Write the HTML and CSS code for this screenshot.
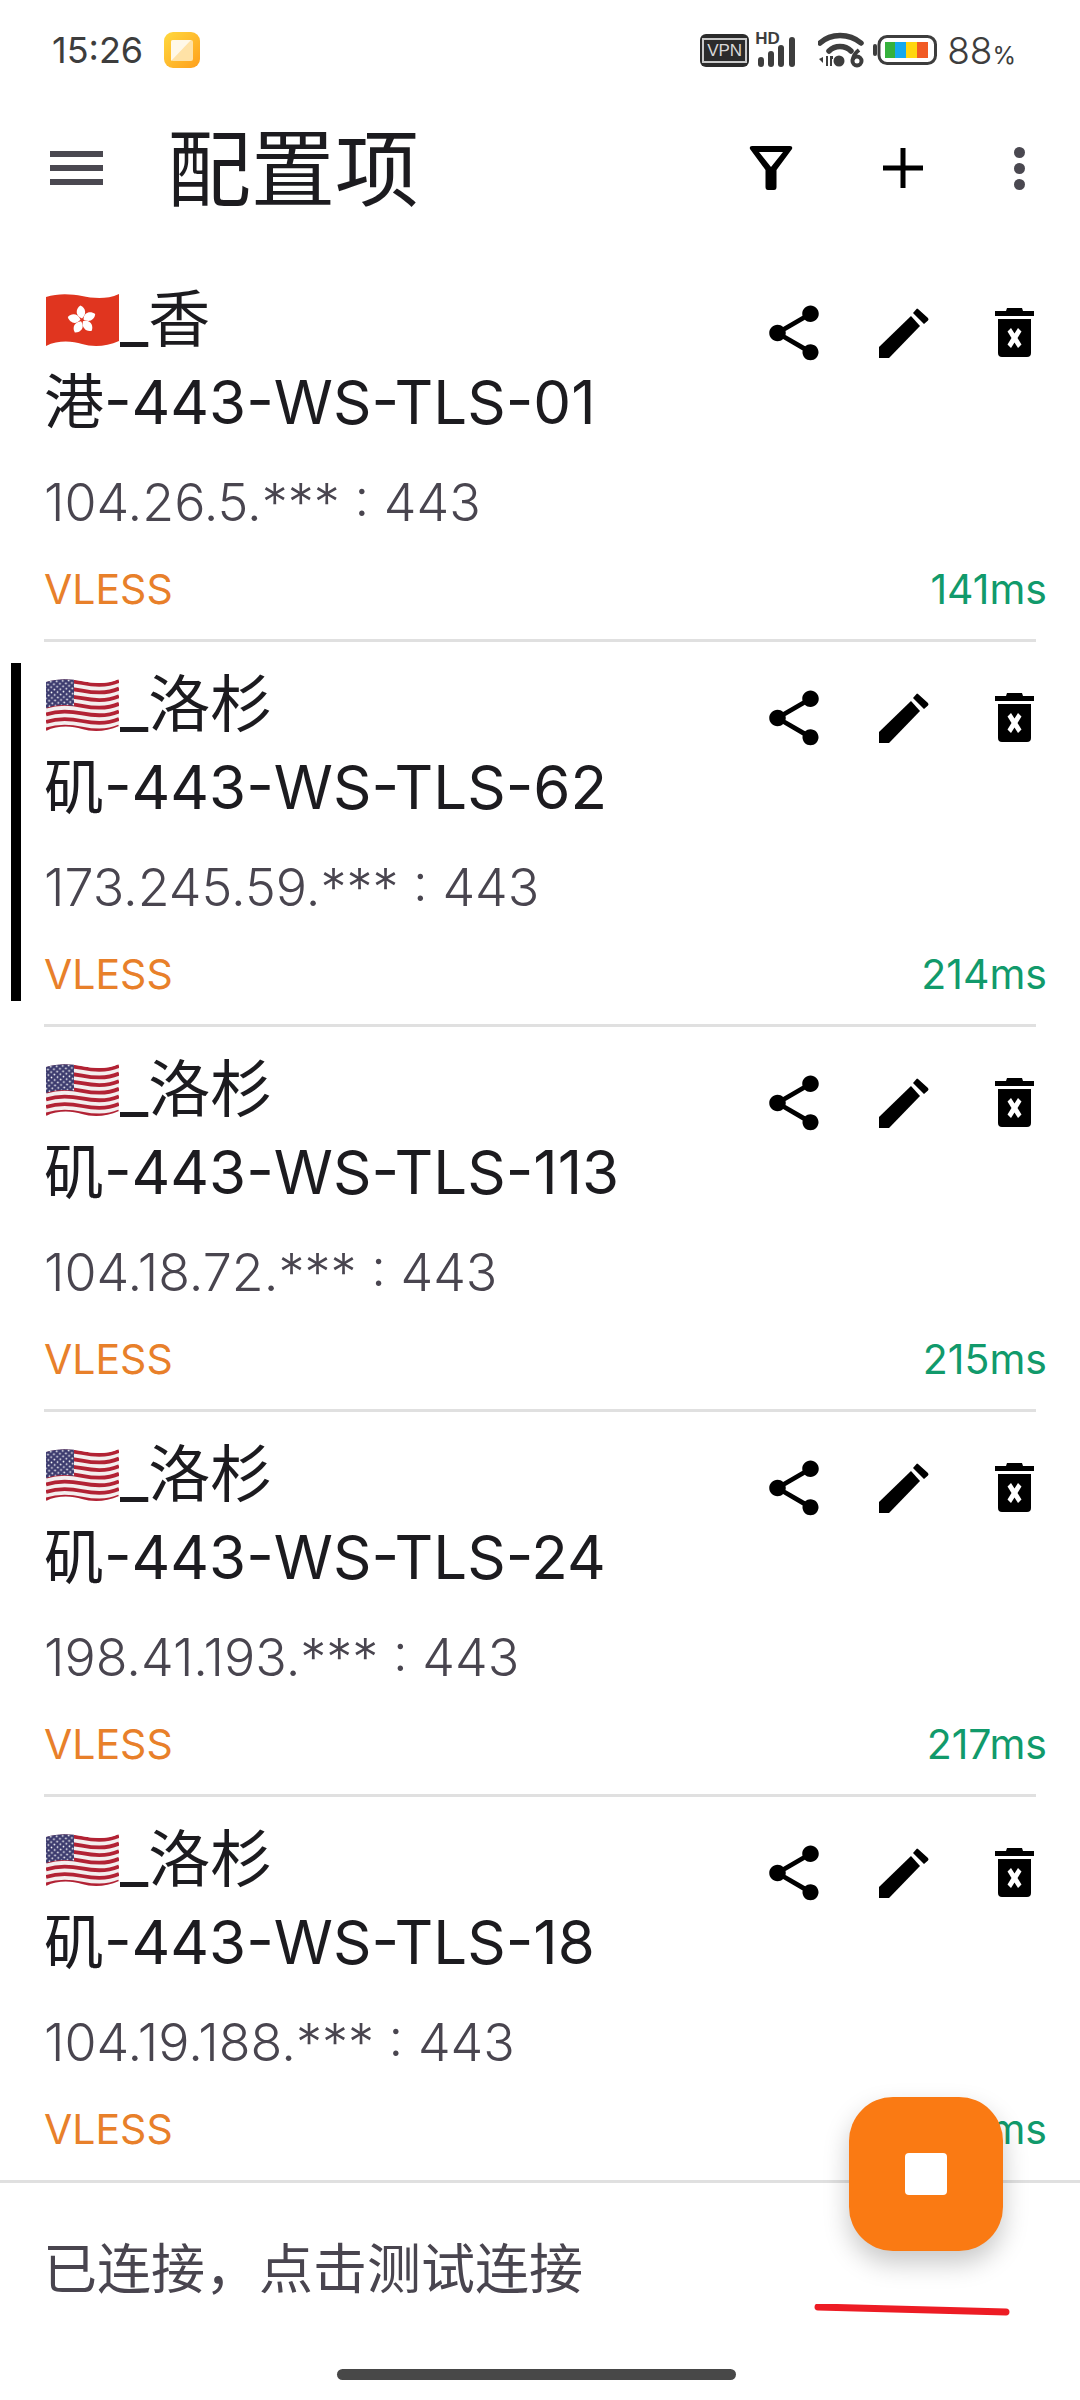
FILE: index.html
```html
<!DOCTYPE html>
<html lang="zh-CN">
<head>
    <meta charset="UTF-8">
    <meta name="viewport" content="width=device-width, initial-scale=1.0">
    <title>配置项</title>
    <link rel="stylesheet" href="styles.css">
</head>
<body>
    <svg class="defs" width="0" height="0">
        <defs>
            <clipPath id="flag-clip">
                <path d="M0 4C12 0 26 1 36 3S60 7 73 1V48C60 54 46 54 36 51S12 47 0 53Z"/>
            </clipPath>
            <pattern id="stars" width="6" height="5.4" patternUnits="userSpaceOnUse" patternTransform="rotate(-4)">
                <circle cx="1.5" cy="1.4" r="0.9" fill="#fff"/>
                <circle cx="4.5" cy="4.1" r="0.9" fill="#fff"/>
            </pattern>
            <path id="stripe" d="M0 0C12 -4 26 -3 36 -1S60 3 73 -3" fill="none" stroke="#b22234" stroke-width="3.8"/>
            <symbol id="flag-us" viewBox="0 0 73 54">
                <g clip-path="url(#flag-clip)">
                    <rect width="73" height="54" fill="#f4eeee"/>
                    <use href="#stripe" y="6"/>
                    <use href="#stripe" y="13.6"/>
                    <use href="#stripe" y="21.2"/>
                    <use href="#stripe" y="28.8"/>
                    <use href="#stripe" y="36.4"/>
                    <use href="#stripe" y="44"/>
                    <use href="#stripe" y="51.6"/>
                    <path d="M0 0H28V28C18 26 9 27 0 30Z" fill="#3c3b6e"/>
                    <path d="M0 0H28V28C18 26 9 27 0 30Z" fill="url(#stars)"/>
                </g>
            </symbol>
            <symbol id="flag-hk" viewBox="0 0 73 54">
                <g clip-path="url(#flag-clip)">
                    <rect width="73" height="54" fill="#e0351f"/>
                </g>
                <g fill="#fff" transform="translate(36 27) scale(0.8)">
                    <path id="petal" d="M0 -2C-9 -5 -8 -14 -2 -18C5 -15 6 -7 0 -2Z"/>
                    <use href="#petal" transform="rotate(72)"/>
                    <use href="#petal" transform="rotate(144)"/>
                    <use href="#petal" transform="rotate(216)"/>
                    <use href="#petal" transform="rotate(288)"/>
                </g>
            </symbol>
            <symbol id="ic-share" viewBox="0 0 24 24">
                <path d="M18 16.08c-.76 0-1.44.3-1.96.77L8.91 12.7c.05-.23.09-.46.09-.7s-.04-.47-.09-.7l7.05-4.11c.54.5 1.25.81 2.04.81 1.66 0 3-1.34 3-3s-1.34-3-3-3-3 1.34-3 3c0 .24.04.47.09.7L8.04 9.81C7.5 9.31 6.79 9 6 9c-1.66 0-3 1.34-3 3s1.34 3 3 3c.79 0 1.5-.31 2.04-.81l7.12 4.16c-.05.21-.08.43-.08.65 0 1.61 1.31 2.92 2.92 2.92s2.92-1.31 2.92-2.92-1.31-2.92-2.92-2.92z"/>
            </symbol>
            <symbol id="ic-edit" viewBox="-8 -8 66 66">
                <path d="M0 39L32 8 41 18 10 50H0Z"/>
                <path d="M39 1L49 10Q50 11.500 49 12.500L45 16 34 5 37.500 1Q38 0 39 1Z"/>
            </symbol>
            <symbol id="ic-trash" viewBox="-14 -8 66 66">
                <path d="M12 0H27L28 3H39V8H0V3H11Z"/>
                <path fill-rule="evenodd" d="M3 11H36V45Q36 49 32 49H7Q3 49 3 45ZM12.500 23.500L16 20 19.500 25.500 23 20 26.500 23.500 22.500 30 26.500 36.500 23 40 19.500 34.500 16 40 12.500 36.500 16.500 30Z"/>
            </symbol>
        </defs>
    </svg>

    <div class="phone">
        <div class="status">
            <span class="clock">15:26</span>
            <svg class="app-icon" viewBox="0 0 36 36">
                <defs>
                    <linearGradient id="app-grad" x1="0" y1="0" x2="1" y2="1">
                        <stop offset="0" stop-color="#ffd93f"/>
                        <stop offset="1" stop-color="#ff9f1c"/>
                    </linearGradient>
                </defs>
                <rect width="36" height="36" rx="9" fill="url(#app-grad)"/>
                <rect x="7" y="8" width="22" height="21" rx="2" fill="#ffe2a6"/>
                <path d="M7 29V10Q7 8 9 8H27Z" fill="#fff8e8"/>
            </svg>
            <div class="status-right">
                <span class="vpn"><span class="vpn-in">VPN</span></span>
                <span class="signal">
                    <span class="hd">HD</span>
                    <svg class="bars" viewBox="0 0 37 30">
                        <rect x="0" y="20" width="6" height="10" rx="3"/>
                        <rect x="10" y="14" width="6" height="16" rx="3"/>
                        <rect x="20" y="8" width="6" height="22" rx="3"/>
                        <rect x="31" y="0" width="6" height="30" rx="3"/>
                    </svg>
                </span>
                <svg class="wifi" viewBox="0 0 46 36">
                    <path d="M2 11C13 1 31 1 43 11" fill="none" stroke="#3d3d3d" stroke-width="5.500" stroke-linecap="round"/>
                    <path d="M11 19C17 13 27 13 33 19" fill="none" stroke="#3d3d3d" stroke-width="5.500" stroke-linecap="round"/>
                    <circle cx="21" cy="29" r="5.500" fill="#3d3d3d"/>
                    <path d="M1 27L5 31V25ZM8 24H10V34H8ZM12 24H15V27H14V34H12Z" fill="#3d3d3d"/>
                    <circle cx="39" cy="29" r="4.500" fill="none" stroke="#3d3d3d" stroke-width="4"/>
                    <path d="M35 28C35 24 37 21 41 18" fill="none" stroke="#3d3d3d" stroke-width="4"/>
                </svg>
                <svg class="battery" viewBox="0 0 64 30">
                    <rect x="0" y="9" width="4" height="12" rx="2" fill="#3d3d3d"/>
                    <rect x="6" y="1.500" width="56.500" height="27" rx="8" fill="#fff" stroke="#3d3d3d" stroke-width="3"/>
                    <rect x="12" y="7" width="10" height="16" fill="#35b13c"/>
                    <rect x="22" y="7" width="11" height="16" fill="#14a8ee"/>
                    <rect x="33" y="7" width="11" height="16" fill="#ffd60f"/>
                    <rect x="44" y="7" width="11" height="16" fill="#f15a24"/>
                </svg>
                <span class="pct">88<small>%</small></span>
            </div>
        </div>

        <div class="toolbar">
            <div class="menu-btn"><i></i><i></i><i></i></div>
            <h1 class="title">配置项</h1>
            <svg class="ic-filter" viewBox="0 0 44 44">
                <path fill-rule="evenodd" d="M3 0H41Q44 0 43 3L27.500 24V41Q27.500 44 25 44H19Q16.500 44 16.500 41V24L1 3Q0 0 3 0ZM10 6L22 21 34 6Z"/>
            </svg>
            <svg class="ic-plus" viewBox="0 0 40 40">
                <path d="M17.500 0H22.500V17.500H40V22.500H22.500V40H17.500V22.500H0V17.500H17.500Z"/>
            </svg>
            <div class="more-btn"><i></i><i></i><i></i></div>
        </div>

        <div class="list">
            <div class="row">
                <div class="mark"></div>
                <div class="row-body">
                    <div class="row-top">
                        <div class="name"><svg class="flag"><use href="#flag-hk"/></svg>_香<br>港-443-WS-TLS-01</div>
                        <div class="actions">
                            <svg class="act"><use href="#ic-share"/></svg>
                            <svg class="act"><use href="#ic-edit"/></svg>
                            <svg class="act"><use href="#ic-trash"/></svg>
                        </div>
                    </div>
                    <div class="addr">104.26.5.*** : 443</div>
                    <div class="meta"><span class="proto">VLESS</span><span class="ping">141ms</span></div>
                    <div class="sep"></div>
                </div>
            </div>
            <div class="row">
                <div class="mark on"></div>
                <div class="row-body">
                    <div class="row-top">
                        <div class="name"><svg class="flag"><use href="#flag-us"/></svg>_洛杉<br>矶-443-WS-TLS-62</div>
                        <div class="actions">
                            <svg class="act"><use href="#ic-share"/></svg>
                            <svg class="act"><use href="#ic-edit"/></svg>
                            <svg class="act"><use href="#ic-trash"/></svg>
                        </div>
                    </div>
                    <div class="addr">173.245.59.*** : 443</div>
                    <div class="meta"><span class="proto">VLESS</span><span class="ping">214ms</span></div>
                    <div class="sep"></div>
                </div>
            </div>
            <div class="row">
                <div class="mark"></div>
                <div class="row-body">
                    <div class="row-top">
                        <div class="name"><svg class="flag"><use href="#flag-us"/></svg>_洛杉<br>矶-443-WS-TLS-113</div>
                        <div class="actions">
                            <svg class="act"><use href="#ic-share"/></svg>
                            <svg class="act"><use href="#ic-edit"/></svg>
                            <svg class="act"><use href="#ic-trash"/></svg>
                        </div>
                    </div>
                    <div class="addr">104.18.72.*** : 443</div>
                    <div class="meta"><span class="proto">VLESS</span><span class="ping">215ms</span></div>
                    <div class="sep"></div>
                </div>
            </div>
            <div class="row">
                <div class="mark"></div>
                <div class="row-body">
                    <div class="row-top">
                        <div class="name"><svg class="flag"><use href="#flag-us"/></svg>_洛杉<br>矶-443-WS-TLS-24</div>
                        <div class="actions">
                            <svg class="act"><use href="#ic-share"/></svg>
                            <svg class="act"><use href="#ic-edit"/></svg>
                            <svg class="act"><use href="#ic-trash"/></svg>
                        </div>
                    </div>
                    <div class="addr">198.41.193.*** : 443</div>
                    <div class="meta"><span class="proto">VLESS</span><span class="ping">217ms</span></div>
                    <div class="sep"></div>
                </div>
            </div>
            <div class="row">
                <div class="mark"></div>
                <div class="row-body">
                    <div class="row-top">
                        <div class="name"><svg class="flag"><use href="#flag-us"/></svg>_洛杉<br>矶-443-WS-TLS-18</div>
                        <div class="actions">
                            <svg class="act"><use href="#ic-share"/></svg>
                            <svg class="act"><use href="#ic-edit"/></svg>
                            <svg class="act"><use href="#ic-trash"/></svg>
                        </div>
                    </div>
                    <div class="addr">104.19.188.*** : 443</div>
                    <div class="meta"><span class="proto">VLESS</span><span class="ping">218ms</span></div>
                </div>
            </div>
        </div>

        <div class="footer">
            <div class="footer-text">已连接，点击测试连接</div>
            <div class="nav-pill"></div>
        </div>

        <!-- floating button and the red pen mark on top of the screenshot -->
        <div class="fab"><span class="fab-stop"></span></div>
        <svg class="pen-mark" viewBox="0 0 200 12">
            <path d="M8 3L196 8" stroke="#ed1c24" stroke-width="7" stroke-linecap="round"/>
        </svg>
    </div>
</body>
</html>
```

FILE: styles.css
```css
* {
    box-sizing: border-box;
}

body {
    margin: 0;
    background: #fff;
    font-family: Inter, "Noto Sans CJK SC", sans-serif;
}

.defs {
    position: absolute;
}

.phone {
    position: relative;
    display: flex;
    flex-direction: column;
    width: 1080px;
    height: 2400px;
    overflow: hidden;
    background: #fff;
}

/* Status bar */
.status {
    display: flex;
    align-items: center;
    height: 100px;
    padding: 0 64px 0 52px;
    color: #3d3d3d;
}

.clock {
    font-size: 36px;
}

.app-icon {
    width: 36px;
    height: 36px;
    margin-left: 21px;
}

.status-right {
    display: flex;
    align-items: center;
    margin-left: auto;
}

.vpn {
    display: flex;
    align-items: center;
    justify-content: center;
    width: 49px;
    height: 33px;
    background: #2b2b2b;
    border-radius: 6px;
}

.vpn-in {
    padding: 0 3px;
    border: 2px solid #c9c9c9;
    color: #d8d8d8;
    font: 500 17px/21px "Liberation Sans", sans-serif;
}

.signal {
    position: relative;
    width: 40px;
    height: 33px;
    margin-left: 6px;
}

.hd {
    position: absolute;
    top: -4px;
    left: 0;
    font: 700 17px/18px "Liberation Sans", sans-serif;
}

.bars {
    position: absolute;
    right: 0;
    bottom: 0;
    width: 37px;
    height: 30px;
    fill: #3d3d3d;
}

.wifi {
    width: 46px;
    height: 36px;
    margin-left: 23px;
}

.battery {
    width: 64px;
    height: 30px;
    margin-left: 9px;
}

.pct {
    margin-left: 10px;
    font-size: 37px;
    font-weight: 300;
}

.pct small {
    font-size: 24px;
    font-weight: 400;
}

/* Toolbar */
.toolbar {
    display: flex;
    align-items: center;
    height: 136px;
    margin-bottom: 21px;
    padding-left: 50px;
}

.menu-btn {
    display: flex;
    flex-direction: column;
    gap: 8px;
    width: 53px;
}

.menu-btn i {
    height: 6px;
    background: #4a4850;
}

.title {
    margin: 3px 0 0 64px;
    color: #1c1b1f;
    font-size: 84px;
    font-weight: 400;
    line-height: 100px;
}

.ic-filter {
    width: 44px;
    height: 44px;
    margin-left: auto;
}

.ic-plus {
    width: 40px;
    height: 40px;
    margin-left: 90px;
}

.more-btn {
    display: flex;
    flex-direction: column;
    gap: 5px;
    margin: 0 55px 0 91px;
}

.more-btn i {
    width: 11px;
    height: 11px;
    background: #4a4850;
    border-radius: 50%;
}

/* Server list */
.list {
    flex: 1;
    overflow: hidden;
}

.row {
    display: flex;
    height: 385px;
    padding-left: 11px;
}

.mark {
    flex: none;
    width: 10px;
    margin: 21px 0 26px;
}

.mark.on {
    background: #000;
}

.row-body {
    display: flex;
    flex: 1;
    flex-direction: column;
    min-width: 0;
    margin: 0 33px 0 23px;
}

.row-top {
    display: flex;
    justify-content: space-between;
    padding-top: 22px;
}

.name {
    color: #1c1b1f;
    font-size: 60px;
    line-height: 82px;
    white-space: nowrap;
}

.name::first-line {
    font-size: 62px;
}

.flag {
    width: 73px;
    height: 54px;
    margin: 0 1px 0 2px;
    vertical-align: -5px;
}

.actions {
    display: flex;
    gap: 44px;
    margin-top: 21px;
}

.act {
    width: 66px;
    height: 66px;
}

.addr {
    margin-top: 30px;
    color: #49454f;
    font-size: 52px;
    font-weight: 300;
    line-height: 60px;
}

.meta {
    display: flex;
    justify-content: space-between;
    margin-top: 26px;
    font-size: 41px;
    line-height: 60px;
}

.proto {
    color: #e8802a;
}

.ping {
    color: #119a6b;
}

.sep {
    width: 992px;
    height: 3px;
    margin-top: auto;
    background: #e0e0e0;
}

/* Bottom bar */
.footer {
    display: flex;
    flex-direction: column;
    height: 220px;
    border-top: 3px solid #e0e0e0;
}

.footer-text {
    margin: 51px 0 0 43px;
    color: #49454f;
    font-size: 54px;
    line-height: 72px;
}

.nav-pill {
    width: 399px;
    height: 11px;
    margin: auto 0 20px 337px;
    background: #484848;
    border-radius: 6px;
}

.fab {
    position: absolute;
    top: 2097px;
    left: 849px;
    display: flex;
    align-items: center;
    justify-content: center;
    width: 154px;
    height: 154px;
    background: #fa7a13;
    border-radius: 44px;
    box-shadow: 0 12px 26px rgba(0, 0, 0, 0.22);
}

.fab-stop {
    width: 42px;
    height: 42px;
    background: #fff;
    border-radius: 4px;
}

.pen-mark {
    position: absolute;
    top: 2304px;
    left: 810px;
    width: 200px;
    height: 12px;
}
```
